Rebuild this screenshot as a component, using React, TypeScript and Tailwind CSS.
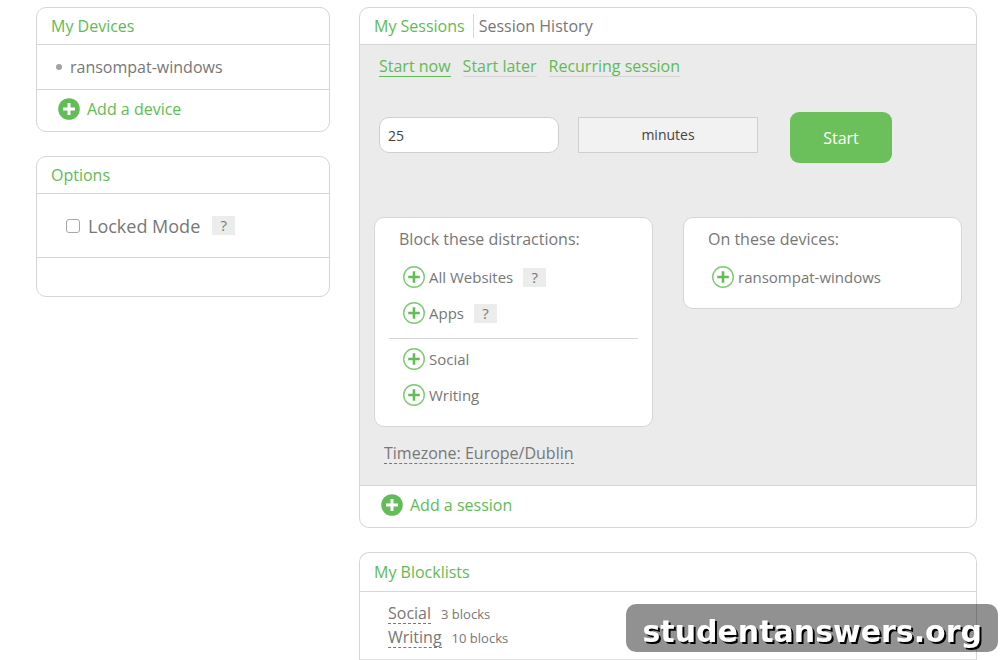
import { useState } from 'react'
import type { ReactNode } from 'react'

const distractions = ['All Websites', 'Apps']
const blocklists = [
  { name: 'Social', blocks: 3 },
  { name: 'Writing', blocks: 10 },
]
const modes = ['Start now', 'Start later', 'Recurring session']

function SolidPlus() {
  return (
    <svg viewBox="0 0 22 22" className="size-[22px] shrink-0" aria-hidden="true">
      <circle cx="11" cy="11" r="10.8" fill="#62bd57" />
      <path d="M11 5v12M5 11h12" stroke="#fff" strokeWidth="3" />
    </svg>
  )
}

function RingPlus() {
  return (
    <svg viewBox="0 0 22 22" className="size-[22px] shrink-0" aria-hidden="true">
      <circle cx="11" cy="11" r="10.3" fill="#fff" stroke="#7ccb72" strokeWidth="1.4" />
      <path d="M11 5.2v11.6M5.2 11h11.6" stroke="#62bd57" strokeWidth="2.6" />
    </svg>
  )
}

function Panel({ title, children }: { title: ReactNode; children: ReactNode }) {
  return (
    <section className="overflow-hidden rounded-[10px] border border-[#d6d6d6] bg-white">
      <header className="flex h-[37px] items-center border-b border-[#d6d6d6] px-[14px] text-[#5fbb54]">{title}</header>
      {children}
    </section>
  )
}

function Help({ label }: { label: string }) {
  return (
    <button
      aria-label={label}
      className="flex h-[19px] w-[23px] items-center justify-center bg-[#ececec] text-[15px] text-[#777]"
    >
      ?
    </button>
  )
}

function AddButton({ children, className }: { children: ReactNode; className: string }) {
  return (
    <button className={`flex items-center gap-[7px] text-[#5fbb54] ${className}`}>
      <SolidPlus />
      {children}
    </button>
  )
}

function PickItem({ name }: { name: string }) {
  return (
    <button className="flex h-9 items-center gap-1 text-[15px]">
      <RingPlus />
      {name}
    </button>
  )
}

export default function App() {
  const [mode, setMode] = useState('Start now')
  const [length, setLength] = useState('25')

  return (
    <main
      className="grid grid-cols-[294px_1fr] items-start gap-[29px] pt-[7px] pr-[23px] pl-9 text-base text-[#777] font-['Open_Sans',sans-serif]"
    >
      {/* Left column */}
      <div className="flex flex-col gap-6">
        <Panel title={<h2>My Devices</h2>}>
          <ul className="flex h-[45px] items-center border-b border-[#d6d6d6] px-[19px]">
            <li className="flex items-center gap-2">
              <span className="size-[6px] rounded-full bg-[#a3a3a3]" />
              ransompat-windows
            </li>
          </ul>
          <AddButton className="h-[41px] px-[21px] pb-[3px]">Add a device</AddButton>
        </Panel>

        <Panel title={<h2>Options</h2>}>
          <div className="flex h-16 items-center gap-3 border-b border-[#d6d6d6] px-[29px]">
            <label className="flex items-center gap-2 text-lg">
              <input
                type="checkbox"
                className="size-[14px] appearance-none rounded-[3px] border border-[#a8a8a8] bg-white checked:bg-[#62bd57]"
              />
              Locked Mode
            </label>
            <Help label="About locked mode" />
          </div>
          <div className="h-[38px]" />
        </Panel>
      </div>

      {/* Right column */}
      <div className="flex flex-col gap-6">
        <Panel
          title={
            <nav className="flex items-center gap-2">
              <a href="#sessions">My Sessions</a>
              <a href="#history" className="border-l border-[#d6d6d6] pl-[5px] text-[#777]">
                Session History
              </a>
            </nav>
          }
        >
          <div className="border-b border-[#d6d6d6] bg-[#ebebeb] px-[14px] pb-5">
            <div className="flex gap-3 px-[5px] pt-3 text-[#5fbb54]">
              {modes.map(m => (
                <button
                  key={m}
                  onClick={() => setMode(m)}
                  className={`h-5 border-b leading-[19px] ${m === mode ? 'border-[#5fbb54]' : 'border-[#d6d6d6]'}`}
                >
                  {m}
                </button>
              ))}
            </div>

            <form
              className="mt-[35px] flex items-start px-[5px] text-sm text-[#444]"
              onSubmit={e => e.preventDefault()}
            >
              <input
                aria-label="Session length"
                value={length}
                onChange={e => setLength(e.target.value)}
                className="mt-[5px] h-9 w-[180px] rounded-[10px] border border-[#cfcfcf] bg-white px-2 outline-none"
              />
              <select
                aria-label="Unit"
                className="mt-[5px] ml-[19px] h-9 w-[180px] appearance-none border border-[#cfcfcf] bg-[#f2f2f2] text-center [text-align-last:center] outline-none"
              >
                <option>minutes</option>
              </select>
              <button className="ml-8 h-[51px] w-[102px] rounded-[9px] bg-[#6cc05c] text-base text-white">Start</button>
            </form>

            <div className="mt-[54px] grid grid-cols-2 items-start gap-[30px]">
              <div className="rounded-[10px] border border-[#d6d6d6] bg-white px-[14px] pt-[9px] pb-[13px]">
                <h3 className="px-[10px] pb-2 leading-6">Block these distractions:</h3>
                <ul className="border-b border-[#d6d6d6] px-[14px] pb-[7px]">
                  {distractions.map(d => (
                    <li key={d} className="flex items-center gap-[10px]">
                      <PickItem name={d} />
                      <Help label={`About ${d}`} />
                    </li>
                  ))}
                </ul>
                <ul className="px-[14px] pt-[2px]">
                  {blocklists.map(b => (
                    <li key={b.name}>
                      <PickItem name={b.name} />
                    </li>
                  ))}
                </ul>
              </div>

              <div className="rounded-[10px] border border-[#d6d6d6] bg-white px-[14px] pt-[9px] pb-[13px]">
                <h3 className="px-[10px] pb-2 leading-6">On these devices:</h3>
                <div className="px-[14px]">
                  <PickItem name="ransompat-windows" />
                </div>
              </div>
            </div>

            <button className="mt-[17px] ml-[10px] h-5 border-b border-dashed border-[#777] leading-[19px]">
              Timezone: Europe/Dublin
            </button>
          </div>
          <AddButton className="h-[41px] px-[21px] pb-[3px]">Add a session</AddButton>
        </Panel>

        <section className="rounded-t-[10px] border border-b-0 border-[#d6d6d6] bg-white">
          <header className="flex h-[39px] items-center border-b border-[#d6d6d6] px-[14px] text-[#5fbb54]">
            <h2>My Blocklists</h2>
          </header>
          <ul className="flex flex-col gap-1 border-b border-[#e4e4e4] px-7 pt-3 pb-[11px]">
            {blocklists.map(b => (
              <li key={b.name} className="flex items-center gap-[10px]">
                <a href={`#${b.name}`} className="h-5 border-b border-dashed border-[#777] leading-[19px]">
                  {b.name}
                </a>
                <span className="text-[13px] leading-5">{b.blocks} blocks</span>
              </li>
            ))}
          </ul>
        </section>
      </div>

      <div className="fixed right-[2px] bottom-2 flex h-12 items-center rounded-[10px] bg-black/43 px-4 pt-[6px] font-['DejaVu_Sans',sans-serif] text-[30px] font-bold text-white [text-shadow:2px_2px_0_#000]">
        studentanswers.org
      </div>
    </main>
  )
}
